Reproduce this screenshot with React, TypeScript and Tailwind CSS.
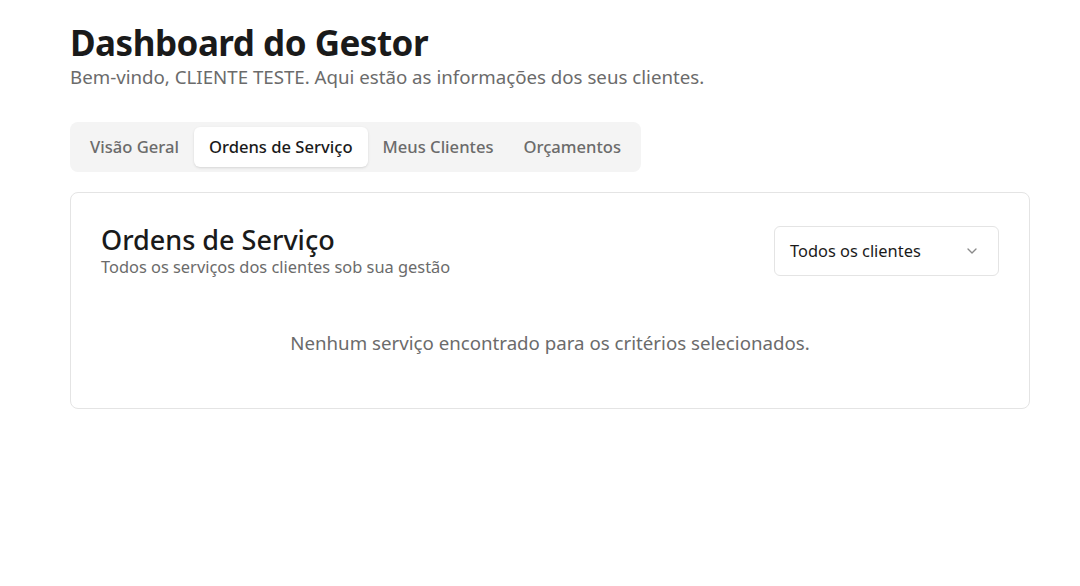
import React from 'react';
import { ChevronDown } from 'lucide-react';

const tabs = ['Visão Geral', 'Ordens de Serviço', 'Meus Clientes', 'Orçamentos'];

export default function App() {
  const active = 'Ordens de Serviço';

  return (
    <div className="min-h-[586px] bg-white font-['Noto_Sans',sans-serif] text-[#1a1a1a]">
      <div className="ml-[70px] w-[960px] pt-[22px]">
        <h1 className="text-[35px] font-bold leading-[42px] tracking-[-0.5px]">Dashboard do Gestor</h1>
        <p className="text-[18.7px] leading-[26px] text-[#6b6b6b]">
          Bem-vindo, CLIENTE TESTE. Aqui estão as informações dos seus clientes.
        </p>

        <div className="mt-[32px] inline-flex h-[50px] items-center rounded-lg bg-[#f4f4f4] px-[5px]">
          {tabs.map((tab) => (
            <button
              key={tab}
              className={`h-[40px] rounded-md px-[15px] text-[16.6px] font-medium ${
                tab === active ? 'bg-white text-[#1a1a1a] shadow-sm' : 'text-[#6b6b6b]'
              }`}
            >
              {tab}
            </button>
          ))}
        </div>

        <div className="mt-[20px] rounded-lg border border-[#e4e4e4] bg-white px-[30px] pb-[52px] pt-[29px]">
          <div className="flex items-start justify-between">
            <div className="pt-[1px]">
              <h2 className="text-[27px] font-medium leading-[34px]">Ordens de Serviço</h2>
              <p className="text-[16.4px] leading-[20px] text-[#6b6b6b]">Todos os serviços dos clientes sob sua gestão</p>
            </div>
            <button className="mt-[4px] flex h-[50px] w-[225px] items-center justify-between rounded-md border border-[#e4e4e4] bg-white pl-[15px] pr-[18px] text-[16.4px]">
              <span>Todos os clientes</span>
              <ChevronDown className="h-4 w-4 text-[#8a8a8a]" />
            </button>
          </div>
          <p className="mt-[53px] text-center text-[18.7px] leading-[26px] text-[#6b6b6b]">
            Nenhum serviço encontrado para os critérios selecionados.
          </p>
        </div>
      </div>
    </div>
  );
}
